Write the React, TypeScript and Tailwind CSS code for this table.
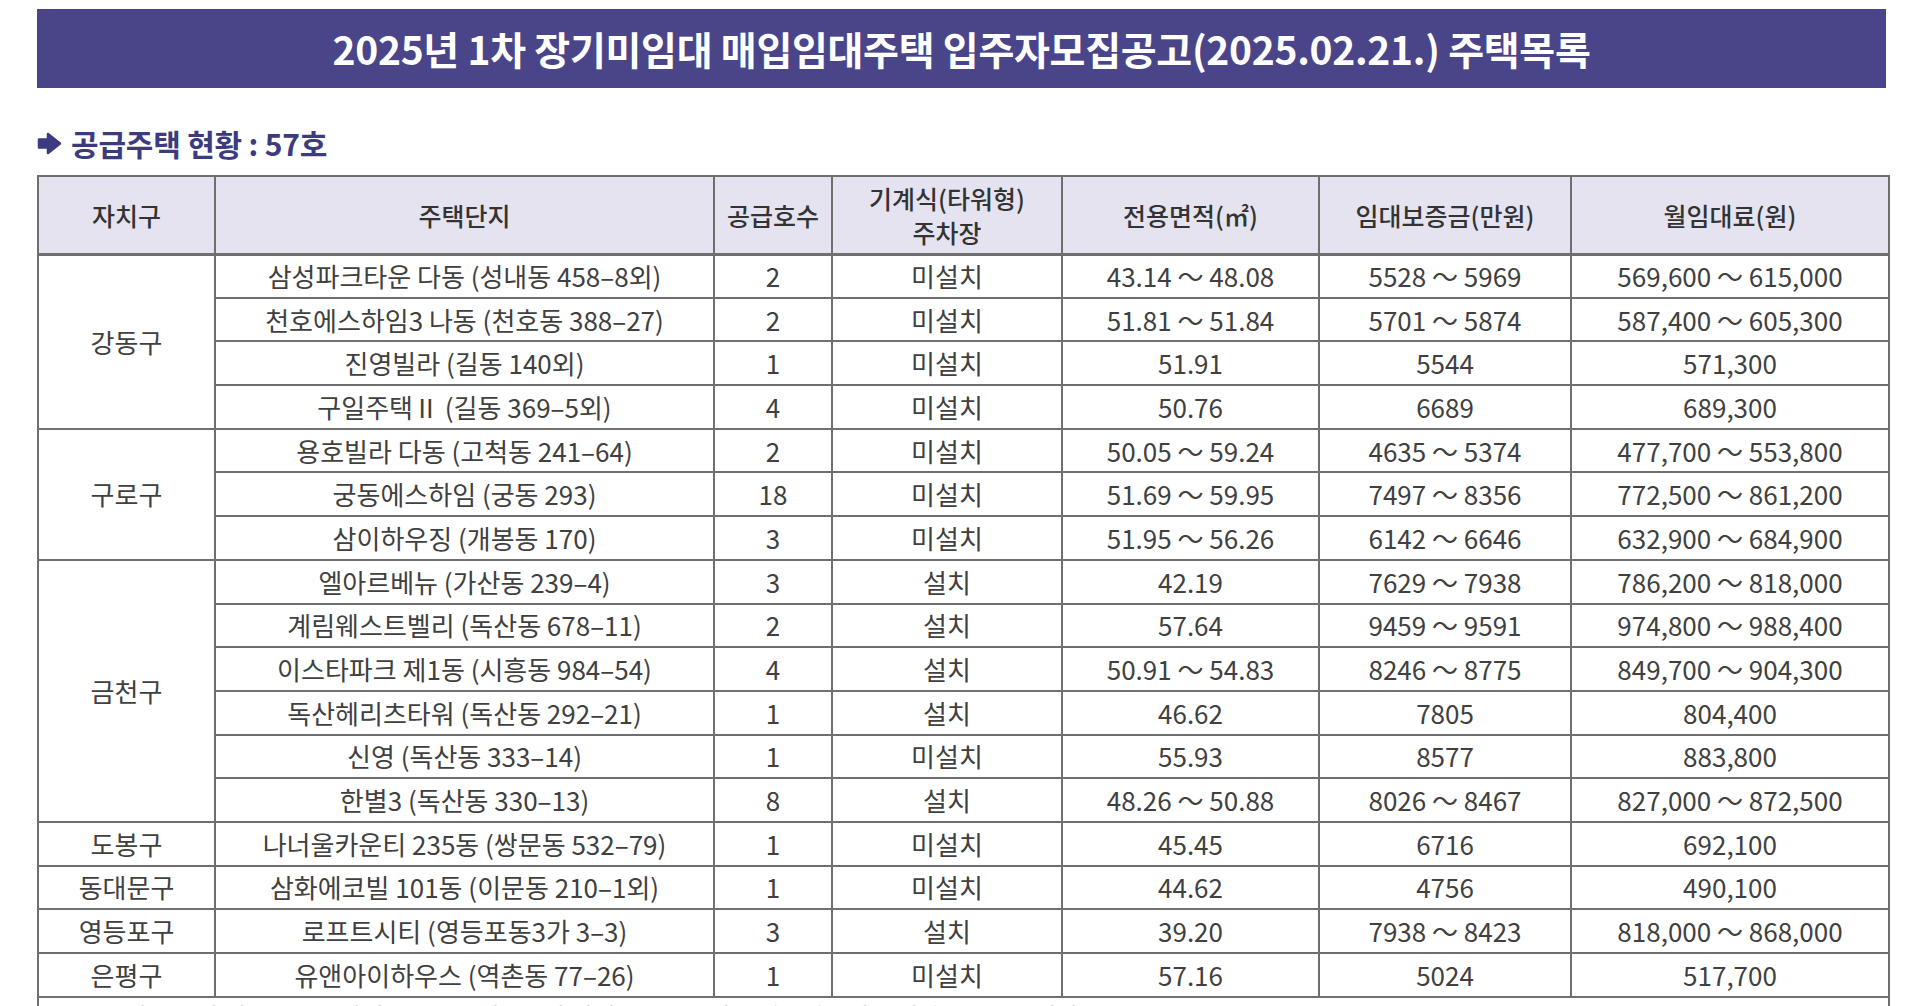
import React from "react";

type Row = {
  name: string;
  units: string;
  parking: string;
  area: string;
  deposit: string;
  rent: string;
};

type Group = { district: string; rows: Row[] };

const groups: Group[] = [
  {
    district: "강동구",
    rows: [
      { name: "삼성파크타운 다동 (성내동 458–8외)", units: "2", parking: "미설치", area: "43.14 ～ 48.08", deposit: "5528 ～ 5969", rent: "569,600 ～ 615,000" },
      { name: "천호에스하임3 나동 (천호동 388–27)", units: "2", parking: "미설치", area: "51.81 ～ 51.84", deposit: "5701 ～ 5874", rent: "587,400 ～ 605,300" },
      { name: "진영빌라 (길동 140외)", units: "1", parking: "미설치", area: "51.91", deposit: "5544", rent: "571,300" },
      { name: "구일주택Ⅱ (길동 369–5외)", units: "4", parking: "미설치", area: "50.76", deposit: "6689", rent: "689,300" },
    ],
  },
  {
    district: "구로구",
    rows: [
      { name: "용호빌라 다동 (고척동 241–64)", units: "2", parking: "미설치", area: "50.05 ～ 59.24", deposit: "4635 ～ 5374", rent: "477,700 ～ 553,800" },
      { name: "궁동에스하임 (궁동 293)", units: "18", parking: "미설치", area: "51.69 ～ 59.95", deposit: "7497 ～ 8356", rent: "772,500 ～ 861,200" },
      { name: "삼이하우징 (개봉동 170)", units: "3", parking: "미설치", area: "51.95 ～ 56.26", deposit: "6142 ～ 6646", rent: "632,900 ～ 684,900" },
    ],
  },
  {
    district: "금천구",
    rows: [
      { name: "엘아르베뉴 (가산동 239–4)", units: "3", parking: "설치", area: "42.19", deposit: "7629 ～ 7938", rent: "786,200 ～ 818,000" },
      { name: "계림웨스트벨리 (독산동 678–11)", units: "2", parking: "설치", area: "57.64", deposit: "9459 ～ 9591", rent: "974,800 ～ 988,400" },
      { name: "이스타파크 제1동 (시흥동 984–54)", units: "4", parking: "설치", area: "50.91 ～ 54.83", deposit: "8246 ～ 8775", rent: "849,700 ～ 904,300" },
      { name: "독산헤리츠타워 (독산동 292–21)", units: "1", parking: "설치", area: "46.62", deposit: "7805", rent: "804,400" },
      { name: "신영 (독산동 333–14)", units: "1", parking: "미설치", area: "55.93", deposit: "8577", rent: "883,800" },
      { name: "한별3 (독산동 330–13)", units: "8", parking: "설치", area: "48.26 ～ 50.88", deposit: "8026 ～ 8467", rent: "827,000 ～ 872,500" },
    ],
  },
  {
    district: "도봉구",
    rows: [
      { name: "나너울카운티 235동 (쌍문동 532–79)", units: "1", parking: "미설치", area: "45.45", deposit: "6716", rent: "692,100" },
    ],
  },
  {
    district: "동대문구",
    rows: [
      { name: "삼화에코빌 101동 (이문동 210–1외)", units: "1", parking: "미설치", area: "44.62", deposit: "4756", rent: "490,100" },
    ],
  },
  {
    district: "영등포구",
    rows: [
      { name: "로프트시티 (영등포동3가 3–3)", units: "3", parking: "설치", area: "39.20", deposit: "7938 ～ 8423", rent: "818,000 ～ 868,000" },
    ],
  },
  {
    district: "은평구",
    rows: [
      { name: "유앤아이하우스 (역촌동 77–26)", units: "1", parking: "미설치", area: "57.16", deposit: "5024", rent: "517,700" },
    ],
  },
];

const th = "border-2 border-[#6f6f6f] border-b-[3px] bg-[#e4e3ef] px-1 text-center align-middle text-[25px] font-medium leading-[34px] text-[#333]";
const td = "border-2 border-[#6f6f6f] px-1 text-center align-middle text-[26px] leading-none text-[#404040] whitespace-nowrap";

// chunky right arrow before the section heading
function Arrow() {
  return (
    <svg width="25" height="25" viewBox="0 0 25 25" className="shrink-0">
      <path
        d="M2 8.5 H11 V3 L23 12.5 L11 22 V16.5 H2 Z"
        fill="#3d3b80"
        stroke="#3d3b80"
        strokeWidth="2.5"
        strokeLinejoin="round"
      />
    </svg>
  );
}

export default function App() {
  return (
    <div className="min-h-screen w-[1914px] bg-white font-['Noto_Sans_CJK_KR','Noto_Sans',sans-serif]">
      <div className="ml-[37px] w-[1849px] pt-[9px]">
        <div className="flex h-[79px] items-center justify-center bg-[#4a4589]">
          <h1 className="text-[39px] font-bold tracking-[-0.3px] text-white">
            2025년 1차 장기미임대 매입임대주택 입주자모집공고(2025.02.21.) 주택목록
          </h1>
        </div>
      </div>

      <div className="ml-[37px] mt-[35px] flex h-[40px] items-center gap-[9px]">
        <Arrow />
        <span className="text-[30px] font-bold tracking-[-0.2px] text-[#3d3b80]">공급주택 현황 : 57호</span>
      </div>

      <table className="ml-[37px] mt-[12px] w-[1851px] table-fixed border-collapse">
        <colgroup>
          <col className="w-[177px]" />
          <col className="w-[499px]" />
          <col className="w-[118px]" />
          <col className="w-[230px]" />
          <col className="w-[257px]" />
          <col className="w-[252px]" />
          <col className="w-[318px]" />
        </colgroup>
        <thead>
          <tr className="h-[78px]">
            <th className={th}>자치구</th>
            <th className={th}>주택단지</th>
            <th className={th}>공급호수</th>
            <th className={th}>
              기계식(타워형)
              <br />
              주차장
            </th>
            <th className={th}>전용면적(㎡)</th>
            <th className={th}>임대보증금(만원)</th>
            <th className={th}>월임대료(원)</th>
          </tr>
        </thead>
        <tbody>
          {groups.map((g) =>
            g.rows.map((r, i) => (
              <tr key={g.district + i} className="h-[43.7px]">
                {i === 0 && (
                  <td rowSpan={g.rows.length} className={td}>
                    {g.district}
                  </td>
                )}
                <td className={td}>{r.name}</td>
                <td className={td}>{r.units}</td>
                <td className={td}>{r.parking}</td>
                <td className={td}>{r.area}</td>
                <td className={td}>{r.deposit}</td>
                <td className={td}>{r.rent}</td>
              </tr>
            ))
          )}
          <tr className="h-[60px]">
            <td colSpan={7} className="border-2 border-[#6f6f6f] px-[28px] pt-[6px] align-top text-[24px] leading-none text-[#404040]">
              - 기계식 주차장 설치단지는 관리비에 기계식주차장 관리비용이 추가로 발생하오니 유의하시기 바랍니다.
            </td>
          </tr>
        </tbody>
      </table>
    </div>
  );
}
